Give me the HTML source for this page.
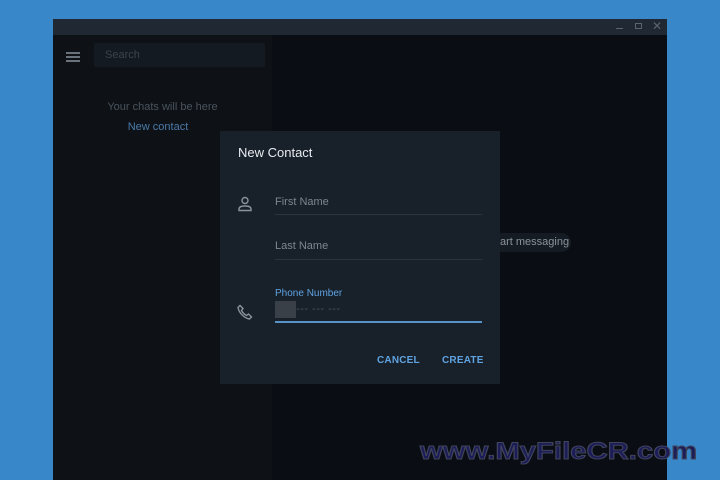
<!DOCTYPE html>
<html><head><style>
*{margin:0;padding:0;box-sizing:border-box}
body{width:720px;height:480px;background:#3787c9;position:relative;overflow:hidden;font-family:"Liberation Sans",sans-serif}
.win{position:absolute;left:53px;top:19px;width:614px;height:461px;background:#0a0d13}
.title{position:absolute;left:0;top:0;width:614px;height:16px;background:#202833}
.side{position:absolute;left:0;top:16px;width:219px;height:445px;background:#0e1217}
.ab{position:absolute;font-size:11px;white-space:nowrap}
.dlg{position:absolute;left:220px;top:131px;width:280px;height:253px;background:#18202a}
.line{position:absolute;left:55px;width:207px;height:1px;background:#2a333e}
</style></head><body>
<div class="win">
 <div class="title">
  <div style="position:absolute;left:563px;top:9px;width:7px;height:1px;background:#5a6470"></div>
  <div style="position:absolute;left:582px;top:4px;width:7px;height:6px;border:1px solid #5a6470"></div>
  <div class="ab" style="left:599px;top:0px;color:#5a6470;font-size:12px">✕</div>
 </div>
 <div class="side">
  <div style="position:absolute;left:13px;top:17px;width:14px;height:2px;background:#6a727c;box-shadow:0 4px 0 #6a727c,0 8px 0 #6a727c"></div>
  <div style="position:absolute;left:41px;top:8px;width:171px;height:24px;background:#141a21;border-radius:2px"></div>
  <div class="ab" style="left:52px;top:14px;color:#3a434d">Search</div>
  <div class="ab" style="left:0;width:219px;text-align:center;top:66px;color:#4a535c">Your chats will be here</div>
  <div class="ab" style="left:0;width:210px;text-align:center;top:86px;color:#4a7aa8">New contact</div>
 </div>
 <div style="position:absolute;left:430px;top:214px;width:88px;height:19px;background:#151b22;border-radius:10px"></div>
 <div class="ab" style="left:447px;top:217px;color:#8a939c">art messaging</div>
</div>
<div class="dlg">
 <div class="ab" style="left:18px;top:14px;font-size:13px;color:#e8ecf0">New Contact</div>
 <svg style="position:absolute;left:17px;top:65px" width="16" height="16" viewBox="0 0 16 16" fill="none" stroke="#8a929c" stroke-width="1.4"><circle cx="8" cy="4.5" r="3"/><path d="M2 14.5v-1.5c0-2 2-3 6-3s6 1 6 3v1.5z"/></svg>
 <div class="ab" style="left:55px;top:65px;color:#7d8690">First Name</div>
 <div class="line" style="top:83px"></div>
 <div class="ab" style="left:55px;top:109px;color:#7d8690">Last Name</div>
 <div class="line" style="top:128px"></div>
 <div class="ab" style="left:55px;top:157px;color:#5fa3e0;font-size:10px">Phone Number</div>
 <div style="position:absolute;left:55px;top:170px;width:21px;height:17px;background:#3a4048"></div>
 <div class="ab" style="left:76px;top:172px;color:#4a535c;letter-spacing:0.5px">--- --- ---</div>
 <div style="position:absolute;left:55px;top:190px;width:207px;height:2px;background:#5893c8"></div>
 <svg style="position:absolute;left:17px;top:173px" width="16" height="16" viewBox="0 0 16 16" fill="none" stroke="#8a929c" stroke-width="1.4"><path d="M3 1.5l3 3-1.5 2c1 2 3 4 5 5l2-1.5 3 3-2 2C7 14 2 9 1 3.5z"/></svg>
 <div class="ab" style="left:157px;top:224px;color:#5fa3e0;font-weight:bold;font-size:10px;letter-spacing:0.2px">CANCEL</div>
 <div class="ab" style="left:222px;top:224px;color:#5fa3e0;font-weight:bold;font-size:10px;letter-spacing:0.2px">CREATE</div>
</div>
<div style="position:absolute;left:420px;top:438px;font-size:24px;font-weight:bold;color:#1c1c58;-webkit-text-stroke:1px #40455a;transform:scaleX(1.22);transform-origin:0 0">www.MyFileCR.com</div>
</body></html>
